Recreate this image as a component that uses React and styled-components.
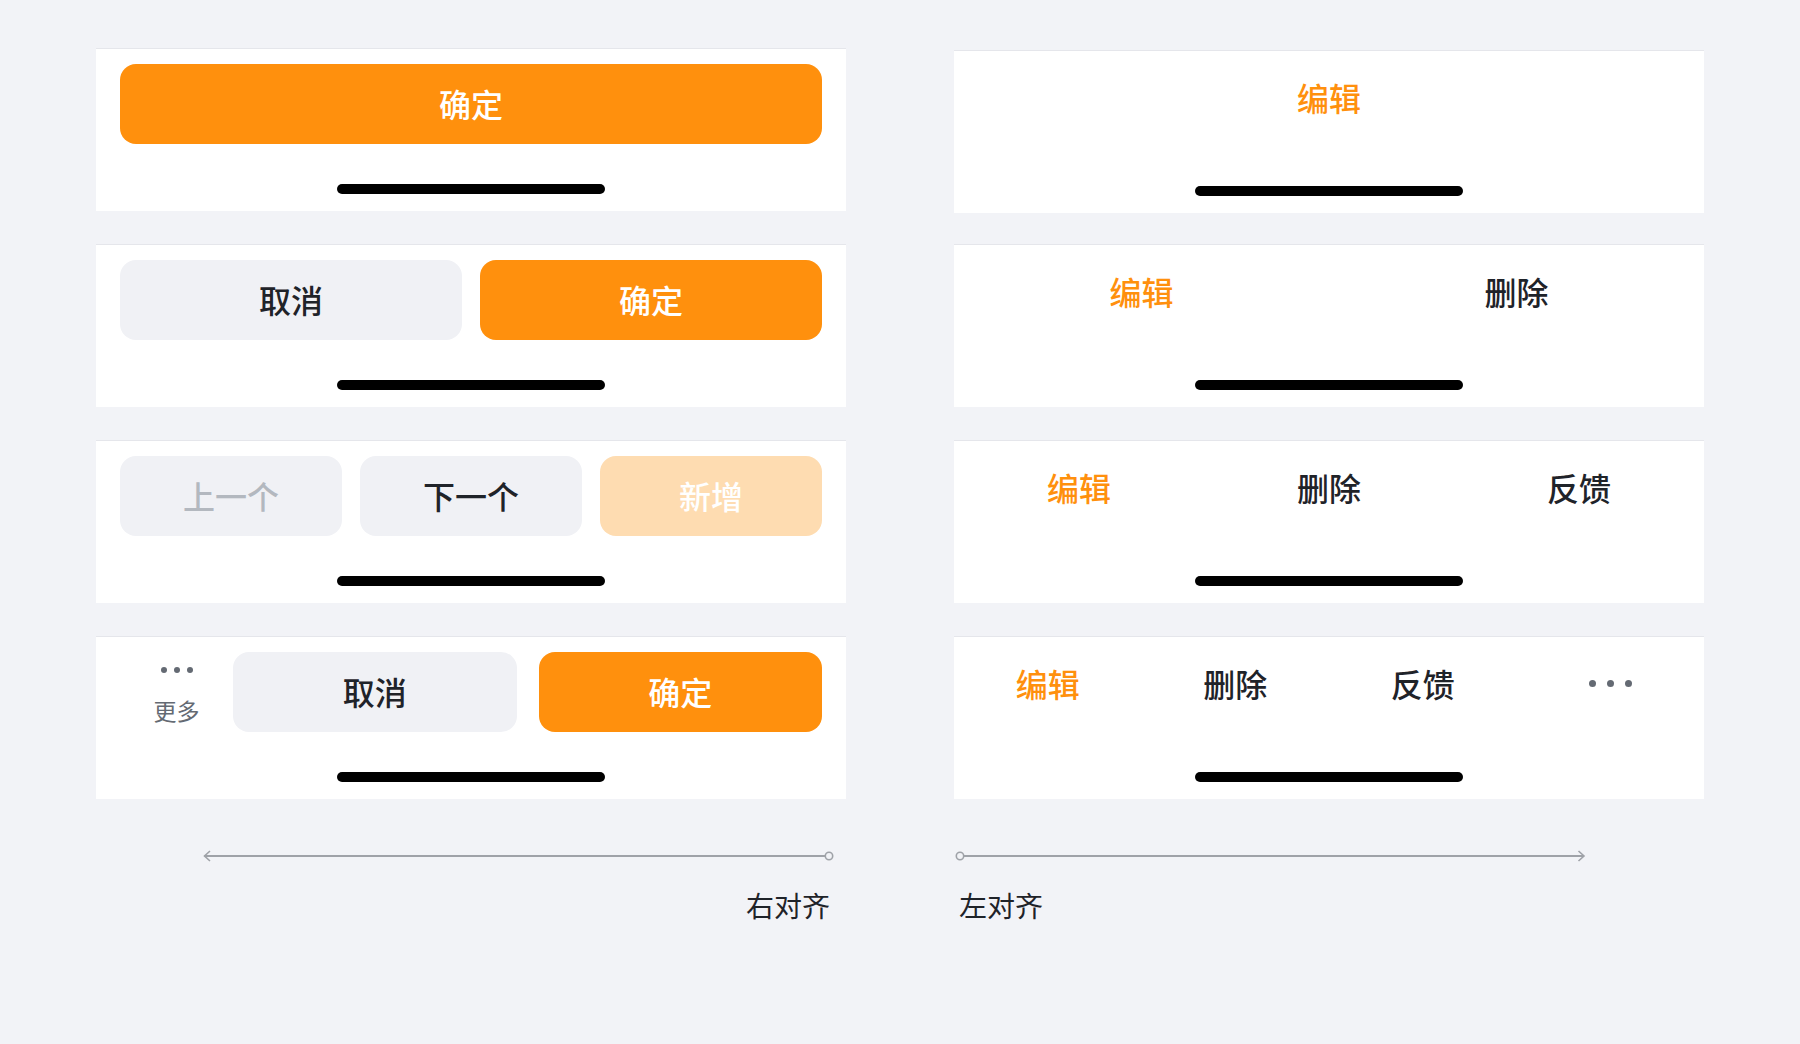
import React from 'react'
import styled, { createGlobalStyle } from 'styled-components'

const GlobalStyle = createGlobalStyle`
    html, body {
        margin: 0;
        background: #f2f3f7;
        font-family: "Noto Sans CJK SC", "Noto Sans", sans-serif;
    }
`

const ORANGE = '#ff900d'
const DARK = '#1f2329'
const GRAY = '#646a73'

function App() {
    return (
        <>
            <GlobalStyle />
            <Page>
                <Column>
                    <Panel>
                        <ButtonRow>
                            <Button $kind="primary">确定</Button>
                        </ButtonRow>
                        <HomeBar />
                    </Panel>
                    <Panel>
                        <ButtonRow>
                            <Button>取消</Button>
                            <Button $kind="primary">确定</Button>
                        </ButtonRow>
                        <HomeBar />
                    </Panel>
                    <Panel>
                        <ButtonRow>
                            <Button $kind="disabled">上一个</Button>
                            <Button>下一个</Button>
                            <Button $kind="primaryDisabled">新增</Button>
                        </ButtonRow>
                        <HomeBar />
                    </Panel>
                    <Panel>
                        <ButtonRow $gap={0}>
                            <MoreBox>
                                <Dots $size={6} $gap={7} />
                                <MoreLabel>更多</MoreLabel>
                            </MoreBox>
                            <ButtonRow $gap={22} $grow>
                                <Button>取消</Button>
                                <Button $kind="primary">确定</Button>
                            </ButtonRow>
                        </ButtonRow>
                        <HomeBar />
                    </Panel>
                </Column>

                <Column>
                    <Panel $flush $shift={2}>
                        <TabRow>
                            <Tab $active>编辑</Tab>
                        </TabRow>
                        <HomeBar />
                    </Panel>
                    <Panel $flush>
                        <TabRow>
                            <Tab $active>编辑</Tab>
                            <Tab>删除</Tab>
                        </TabRow>
                        <HomeBar />
                    </Panel>
                    <Panel $flush>
                        <TabRow>
                            <Tab $active>编辑</Tab>
                            <Tab>删除</Tab>
                            <Tab>反馈</Tab>
                        </TabRow>
                        <HomeBar />
                    </Panel>
                    <Panel $flush>
                        <TabRow>
                            <Tab $active>编辑</Tab>
                            <Tab>删除</Tab>
                            <Tab>反馈</Tab>
                            <Tab><Dots $size={7} $gap={11} /></Tab>
                        </TabRow>
                        <HomeBar />
                    </Panel>
                </Column>

                <Annotation $align="right">
                    <ArrowLine direction="left" />
                    <Caption>右对齐</Caption>
                </Annotation>
                <Annotation $align="left">
                    <ArrowLine direction="right" />
                    <Caption>左对齐</Caption>
                </Annotation>
            </Page>
        </>
    )
}

function Dots({ $size, $gap }) {
    return (
        <DotWrap $gap={$gap}>
            <Dot $size={$size} />
            <Dot $size={$size} />
            <Dot $size={$size} />
        </DotWrap>
    )
}

function ArrowLine({ direction }) {
    // circle marks where the text starts, chevron shows the direction it grows
    const w = 632
    if (direction === 'left') {
        return (
            <svg width={w} height="12" viewBox={`0 0 ${w} 12`}>
                <path d="M8 1 L2.5 6 L8 11" fill="none" stroke="#9fa2a8" strokeWidth="1.6" />
                <line x1="2.5" y1="6" x2={w - 9} y2="6" stroke="#9fa2a8" strokeWidth="2" />
                <circle cx={w - 5} cy="6" r="3.7" fill="#f2f3f7" stroke="#9fa2a8" strokeWidth="1.6" />
            </svg>
        )
    }
    return (
        <svg width={w} height="12" viewBox={`0 0 ${w} 12`}>
            <circle cx="5" cy="6" r="3.7" fill="#f2f3f7" stroke="#9fa2a8" strokeWidth="1.6" />
            <line x1="9" y1="6" x2={w - 3} y2="6" stroke="#9fa2a8" strokeWidth="2" />
            <path d={`M${w - 8.5} 1 L${w - 3} 6 L${w - 8.5} 11`} fill="none" stroke="#9fa2a8" strokeWidth="1.6" />
        </svg>
    )
}

export default App

const Page = styled.div`
    display: grid;
    grid-template-columns: 750px 750px;
    column-gap: 108px;
    row-gap: 51px;
    padding: 48px 96px;
    align-items: start;
`

const Column = styled.div`
    display: flex;
    flex-direction: column;
    gap: 33px;
`

const Panel = styled.section`
    display: flex;
    flex-direction: column;
    background: #fff;
    border-top: 1px solid #e5e6eb;
    padding: 15px ${p => (p.$flush ? 0 : 24)}px 17px;
    box-sizing: border-box;
    margin-top: ${p => p.$shift || 0}px;
    margin-bottom: ${p => -(p.$shift || 0)}px;
`

const ButtonRow = styled.div`
    display: flex;
    gap: ${p => p.$gap ?? 18}px;
    height: 80px;
    flex: ${p => (p.$grow ? 1 : 'none')};
`

const buttonColors = {
    primary: { bg: ORANGE, fg: '#fff' },
    primaryDisabled: { bg: '#fedcb1', fg: '#fff' },
    disabled: { bg: '#f0f1f5', fg: '#b3b8bf' },
    default: { bg: '#f0f1f5', fg: DARK },
}

const Button = styled.button`
    flex: 1;
    border: none;
    border-radius: 16px;
    background: ${p => buttonColors[p.$kind || 'default'].bg};
    color: ${p => buttonColors[p.$kind || 'default'].fg};
    font-family: inherit;
    font-size: 32px;
    font-weight: 500;
    display: flex;
    align-items: center;
    justify-content: center;
    padding: 0 0 2px;
`

const MoreBox = styled.div`
    width: 113px;
    display: flex;
    flex-direction: column;
    align-items: center;
    padding-top: 15px;
    gap: 24px;
`

const MoreLabel = styled.span`
    font-size: 23px;
    line-height: 26px;
    color: ${GRAY};
`

const DotWrap = styled.span`
    display: inline-flex;
    align-items: center;
    gap: ${p => p.$gap}px;
`

const Dot = styled.i`
    display: block;
    width: ${p => p.$size}px;
    height: ${p => p.$size}px;
    border-radius: 50%;
    background: ${GRAY};
`

const TabRow = styled.div`
    display: flex;
    height: 80px;
    align-items: flex-start;
`

const Tab = styled.div`
    flex: 1;
    height: 62px;
    display: flex;
    align-items: center;
    justify-content: center;
    font-size: 32px;
    font-weight: 500;
    color: ${p => (p.$active ? ORANGE : DARK)};
`

const HomeBar = styled.div`
    width: 268px;
    height: 10px;
    border-radius: 5px;
    background: #000;
    margin: 40px auto 0;
`

const Annotation = styled.div`
    display: flex;
    flex-direction: column;
    align-items: ${p => (p.$align === 'right' ? 'flex-end' : 'flex-start')};
    padding: ${p => (p.$align === 'right' ? '0 12px 0 0' : '0 0 0 1px')};
    gap: 25px;
`

const Caption = styled.div`
    font-size: 28px;
    line-height: 36px;
    color: ${DARK};
    padding: 0 4px;
`
